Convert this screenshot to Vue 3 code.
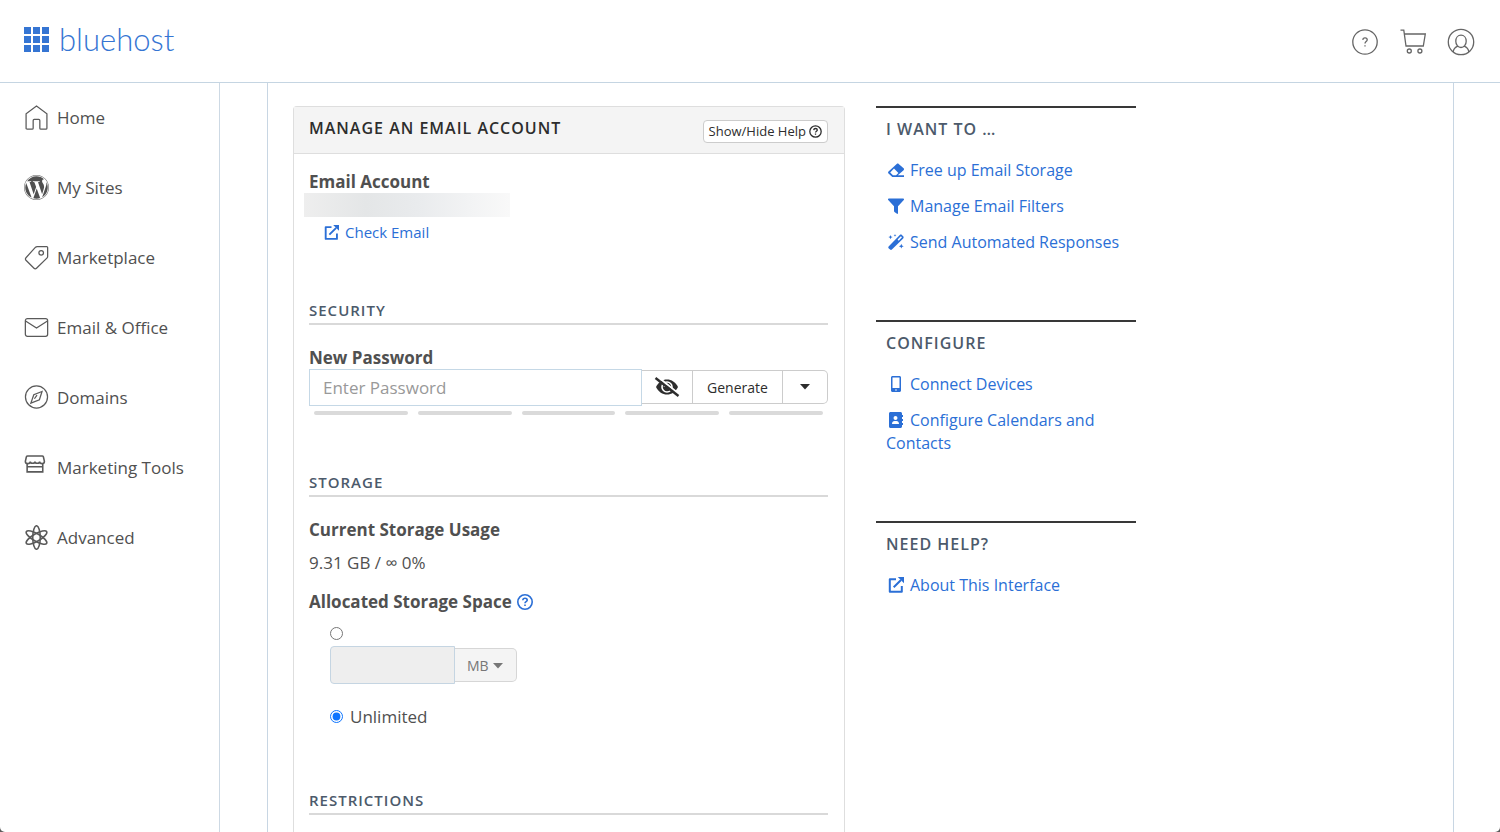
<script setup>
import { ref } from 'vue'

const navItems = [
  { label: 'Home', icon: 'home' },
  { label: 'My Sites', icon: 'wordpress' },
  { label: 'Marketplace', icon: 'tag' },
  { label: 'Email & Office', icon: 'mail' },
  { label: 'Domains', icon: 'compass' },
  { label: 'Marketing Tools', icon: 'store' },
  { label: 'Advanced', icon: 'atom' },
]

const sections = [
  {
    title: 'I WANT TO …',
    links: [
      { label: 'Free up Email Storage', icon: 'eraser' },
      { label: 'Manage Email Filters', icon: 'filter' },
      { label: 'Send Automated Responses', icon: 'wand' },
    ],
  },
  {
    title: 'CONFIGURE',
    links: [
      { label: 'Connect Devices', icon: 'phone' },
      { label: 'Configure Calendars and Contacts', icon: 'contacts' },
    ],
  },
  { title: 'NEED HELP?', links: [{ label: 'About This Interface', icon: 'external' }] },
]

const password = ref('')
const quota = ref('unlimited')
const dots = [0, 9, 18]
</script>

<template>
  <div class="page">
    <header class="topbar">
      <a class="brand" href="#">
        <svg class="brand-grid" viewBox="0 0 25 25" aria-hidden="true">
          <template v-for="y in dots" :key="y">
            <rect v-for="x in dots" :key="x" :x="x" :y="y" width="7" height="7" />
          </template>
        </svg>
        <span>bluehost</span>
      </a>
      <div class="actions">
        <button type="button" class="icon-btn" aria-label="Help">
          <svg viewBox="0 0 28 28" class="line-icon">
            <circle cx="14" cy="14" r="12.2" />
            <path d="M11.8 11.9c.1-1.5 1.1-2.1 2.2-2.1 1.300 0 2.200.8 2.200 1.900 0 1.900-2.200 1.800-2.200 3.700M14 17.200v1.300" />
          </svg>
        </button>
        <button type="button" class="icon-btn" aria-label="Cart">
          <svg viewBox="0 0 28 28" class="line-icon">
            <path d="M1.500 2.200h3.300l2.200 15.800h17.300l2-12H5.500" />
            <circle cx="10.300" cy="23" r="2" />
            <circle cx="20.900" cy="23" r="2" />
          </svg>
        </button>
        <button type="button" class="icon-btn" aria-label="Profile">
          <svg viewBox="0 0 28 28" class="line-icon">
            <circle cx="14" cy="14" r="12.700" />
            <path d="M14 7.200c3 0 5.200 2.500 5.200 6s-2.200 6.300-5.200 6.300-5.200-2.800-5.200-6.300 2.200-6 5.200-6zM6.200 24c.3-2.800 1.800-4.700 4.600-5.800M21.800 24c-.3-2.800-1.800-4.700-4.600-5.800" />
          </svg>
        </button>
      </div>
    </header>

    <div class="layout">
      <nav class="sidebar">
        <a v-for="item in navItems" :key="item.label" href="#" class="nav-link">
          <svg viewBox="0 0 24 24" class="nav-icon" aria-hidden="true">
            <path v-if="item.icon === 'home'" d="M2 22.200V8.400L12 1l10 7.400v13.800c0 .6-.4 1-1 1h-4.800c-.6 0-1-.4-1-1v-7.400c0-.6-.4-1-1-1H9.800c-.6 0-1 .4-1 1v7.400c0 .6-.4 1-1 1H3c-.6 0-1-.4-1-1z" />
            <path v-else-if="item.icon === 'wordpress'" class="solid" d="M21.469 6.825c.84 1.537 1.318 3.300 1.318 5.175 0 3.979-2.156 7.456-5.363 9.325l3.295-9.527c.615-1.540.82-2.771.82-3.864 0-.405-.026-.78-.07-1.110m-7.981.105c.647-.03 1.232-.105 1.232-.105.582-.075.514-.93-.067-.899 0 0-1.755.135-2.880.135-1.064 0-2.850-.15-2.850-.15-.585-.03-.661.855-.075.885 0 0 .54.061 1.125.09l1.680 4.605-2.370 7.080L5.354 6.900c.649-.03 1.234-.1 1.234-.1.585-.075.516-.93-.065-.896 0 0-1.746.138-2.874.138-.2 0-.438-.008-.69-.015C4.911 3.150 8.235 1.215 12 1.215c2.809 0 5.365 1.072 7.286 2.833-.046-.003-.091-.009-.141-.009-1.060 0-1.812.923-1.812 1.914 0 .89.513 1.643 1.060 2.531.411.72.89 1.643.89 2.977 0 .915-.354 1.994-.821 3.479l-1.075 3.585-3.900-11.610zM12 22.784c-1.059 0-2.081-.153-3.048-.437l3.237-9.406 3.315 9.087c.024.053.05.101.078.149-1.120.393-2.325.609-3.582.609M1.211 12c0-1.564.336-3.050.935-4.390L7.290 21.709C3.694 19.960 1.212 16.271 1.211 12M12 0C5.385 0 0 5.385 0 12s5.385 12 12 12 12-5.385 12-12S18.615 0 12 0M12 .5C18.300.5 23.500 5.700 23.500 12S18.300 23.500 12 23.500.5 18.300.5 12 5.700.5 12 .5" fill-rule="evenodd" />
            <g v-else-if="item.icon === 'tag'">
              <path d="M12.600 1.500h9.200c.5 0 .9.400.9.900v8.700c0 .5-.2 1-.5 1.300L12 22.300c-.7.700-1.700.7-2.400 0l-7.700-7.600c-.7-.7-.7-1.800 0-2.500L11.100 2.100c.4-.4.900-.6 1.500-.6z" />
              <circle cx="16.500" cy="7.500" r="2.200" />
            </g>
            <path v-else-if="item.icon === 'mail'" d="M3.300 3.500h17.400c1.100 0 2 .9 2 2v13c0 1.100-.9 2-2 2H3.300c-1.100 0-2-.9-2-2v-13c0-1.100.9-2 2-2zM1.500 5.700L12 12.500l10.500-6.800" />
            <g v-else-if="item.icon === 'compass'">
              <circle cx="12" cy="11.500" r="10.600" />
              <path d="M17.300 6.200l-2.500 8-8.200 3.200 2.800-8zM12.500 9.800L10 13.200" />
            </g>
            <g v-else-if="item.icon === 'store'" class="heavy">
              <path d="M3.500 1h14c.5 0 .9.200 1.100.700l1 4.300c0 1.300-.9 2.300-2.200 2.300S15 7.300 15 6.300c0 1-1 1.700-2.200 1.700s-2.300-.7-2.300-1.700C10.500 7.300 9.500 8 8.300 8S6 7.300 6 6.300c0 1.200-1 2-2.400 2S1.300 7.300 1.300 6l1-4.300C2.500 1.200 3 1 3.500 1zM3 8.300v7.900h15V8.300M3 11.200h15" />
            </g>
            <g v-else class="atom">
              <ellipse cx="12" cy="12" rx="3.600" ry="11.300" />
              <ellipse cx="12" cy="12" rx="3.600" ry="11.300" transform="rotate(60 12 12)" />
              <ellipse cx="12" cy="12" rx="3.600" ry="11.300" transform="rotate(120 12 12)" />
            </g>
          </svg>
          <span>{{ item.label }}</span>
        </a>
      </nav>

      <main class="frame">
        <div class="columns">
          <section class="panel">
            <div class="panel-head">
              <h1>MANAGE AN EMAIL ACCOUNT</h1>
              <button type="button" class="help-btn">
                Show/Hide Help
                <svg viewBox="0 0 16 16" class="help-icon" aria-hidden="true">
                  <circle cx="8" cy="8" r="7" />
                  <path d="M5.800 6.300c.1-1.300 1-2 2.200-2s2.200.8 2.200 1.900c0 1.500-2.200 1.500-2.200 3.100M8 10.600v1.500" />
                </svg>
              </button>
            </div>

            <div class="panel-body">
              <h3>Email Account</h3>
              <div class="redacted"></div>
              <a href="#" class="check-link">
                <svg viewBox="0 0 16 16" class="glyph external" aria-hidden="true">
                  <path class="stroke" d="M8 2.200H1.800v12.600h12V9M5.700 10.300L13 3" />
                  <path d="M9.800 0H16v6.200z" />
                </svg>
                Check Email
              </a>

              <h2 class="first">SECURITY</h2>
              <label for="password" class="field-label">New Password</label>
              <div class="password-row">
                <input id="password" v-model="password" type="password" placeholder="Enter Password" />
                <div class="btn-group">
                  <button type="button" class="eye" aria-label="Show password">
                    <svg viewBox="0 0 26 22" aria-hidden="true">
                      <path d="M2 11c2.500-5 6.500-7.500 11-7.500S21.500 6 24 11c-2.500 5-6.500 7.500-11 7.500S4.500 16 2 11z" />
                      <circle cx="13" cy="11" r="5" class="ring" />
                      <path d="M13 8.500c-1.500 0-2.500 1-2.500 2.500" class="ring" />
                      <path d="M4 1l21.500 17.500" class="halo" />
                      <path d="M1.500 2l23 18" class="slash" />
                    </svg>
                  </button>
                  <button type="button" class="generate">Generate</button>
                  <button type="button" class="more" aria-label="Generator options">
                    <svg viewBox="0 0 10 6" class="caret"><path d="M0 0h10L5 5.500z" /></svg>
                  </button>
                </div>
              </div>
              <div class="meter"><span v-for="n in 5" :key="n"></span></div>

              <h2>STORAGE</h2>
              <h3 class="field-label">Current Storage Usage</h3>
              <p class="usage">9.31 GB / ∞ 0%</p>
              <h3 class="allocated">
                Allocated Storage Space
                <button type="button" class="info" aria-label="About storage space">
                  <svg viewBox="0 0 16 16" class="help-icon">
                    <circle cx="8" cy="8" r="7.200" />
                    <path d="M5.800 6.300c.1-1.300 1-2 2.200-2s2.200.8 2.200 1.900c0 1.500-2.200 1.500-2.200 3.100M8 10.600v1.500" />
                  </svg>
                </button>
              </h3>
              <div class="quota">
                <input v-model="quota" type="radio" name="quota" value="custom" aria-label="Custom quota" />
                <div class="quota-row">
                  <input type="text" class="amount" disabled aria-label="Quota amount" />
                  <div class="unit">
                    <select disabled aria-label="Quota unit"><option>MB</option></select>
                    <svg viewBox="0 0 10 6" class="caret"><path d="M0 0h10L5 5.500z" /></svg>
                  </div>
                </div>
                <label class="unlimited">
                  <input v-model="quota" type="radio" name="quota" value="unlimited" />
                  Unlimited
                </label>
              </div>

              <h2 class="restrictions">RESTRICTIONS</h2>
            </div>
          </section>

          <aside class="side">
            <section v-for="s in sections" :key="s.title">
              <h2>{{ s.title }}</h2>
              <ul>
                <li v-for="l in s.links" :key="l.label">
                  <a href="#"><svg viewBox="0 0 16 16" class="glyph" aria-hidden="true">
                    <g v-if="l.icon === 'eraser'">
                      <path fill-rule="evenodd" d="M15.600 8.200L9.800 13.200H16V15H4.300L.5 11.600c-.6-.6-.6-1.500 0-2.100l8.200-7.600c.6-.5 1.400-.5 2 0l4.900 4.300c.6.600.6 1.400 0 2zM6 6.600L2.200 10.500 5 13.200h3l2.400-2.300z" />
                    </g>
                    <path v-else-if="l.icon === 'filter'" d="M.8.500h14.400c.8 0 1.100.8.600 1.400L10 8.300v7c0 .6-.5.800-1 .5l-2.500-1.900c-.3-.2-.5-.5-.5-.8V8.300L.2 1.900C-.3 1.300 0 .5.800.5z" />
                    <g v-else-if="l.icon === 'wand'">
                      <path fill-rule="evenodd" d="M.6 12.600L11.800 1c.6-.6 1.500-.6 2.100 0l1.300 1.300c.6.600.6 1.500 0 2.100L3.900 15.600c-.5.500-1.300.5-1.800 0L.6 14.200c-.4-.4-.4-1.100 0-1.600zM12.900 2.200L9.600 5.600l1.100 1.100L14 3.300z" />
                      <path d="M2.500 1l.6 1.500 1.500.6-1.500.6-.6 1.500-.6-1.500L.4 3.100l1.500-.6zM7 0l.4 1 1 .4-1 .4-.4 1-.4-1-1-.4 1-.4zM13.300 9.800l.7 1.700 1.700.7-1.700.7-.7 1.700-.7-1.700-1.700-.7 1.700-.7z" />
                    </g>
                    <path v-else-if="l.icon === 'phone'" fill-rule="evenodd" d="M4.500 0h7c.8 0 1.500.7 1.500 1.500v13c0 .8-.7 1.500-1.500 1.500h-7c-.8 0-1.500-.7-1.500-1.500v-13C3 .7 3.700 0 4.500 0zm0 1.500V12h7V1.500zM8 13.200a.8.8 0 100 1.600.8.8 0 000-1.600z" />
                    <path v-else-if="l.icon === 'contacts'" fill-rule="evenodd" d="M2.500 0h10c.8 0 1.500.7 1.500 1.500V3h1v2h-1v2h1v2h-1v2h1v2h-1v1.500c0 .8-.7 1.500-1.500 1.500h-10C1.700 16 1 15.300 1 14.500v-13C1 .7 1.700 0 2.500 0zM7.500 4a2 2 0 100 4 2 2 0 000-4zM4 12h7c0-1.800-1-3-2.500-3h-2C5 9 4 10.200 4 12z" />
                    <g v-else>
                      <path class="stroke" d="M8 2.200H1.800v12.600h12V9M5.700 10.300L13 3" />
                      <path d="M9.800 0H16v6.200z" />
                    </g>
                  </svg>{{ l.label }}</a>
                </li>
              </ul>
            </section>
          </aside>
        </div>
      </main>
    </div>
  </div>
</template>

<style>
html { background: #5c5c5c; }
body { margin: 0; }
</style>

<style scoped>
* { box-sizing: border-box; }
.page {
  min-height: 100vh;
  display: flex;
  flex-direction: column;
  background: #fff;
  border-radius: 0 0 5px 5px;
  overflow: hidden;
  font-family: "Open Sans", "Noto Sans", sans-serif;
  font-size: 17px;
  line-height: 23px;
  color: #505050;
}
h1, h2, h3, p, ul { margin: 0; padding: 0; }
ul { list-style: none; }
a { color: #2b6fd6; text-decoration: none; }
button, input, select { font: inherit; color: inherit; }
button { cursor: pointer; }

.topbar {
  height: 83px;
  display: flex;
  align-items: center;
  justify-content: space-between;
  padding: 0 25px 0 24px;
  border-bottom: 1px solid #c5d5e2;
}
.brand {
  display: flex;
  align-items: center;
  gap: 10px;
  padding-bottom: 4px;
  font-family: Lato, "Open Sans", sans-serif;
  font-weight: 300;
  font-size: 31px;
  line-height: 40px;
  color: #3575d3;
}
.brand-grid { width: 25px; height: 25px; fill: #3575d3; }
.actions { display: flex; gap: 20px; padding-top: 1px; }
.icon-btn { padding: 0; border: 0; background: none; display: flex; }
.icon-btn svg { width: 28px; height: 28px; }
.line-icon { fill: none; stroke: #666; stroke-width: 1.3; }

.layout { flex: 1; display: flex; }
.sidebar {
  width: 220px;
  flex: none;
  padding: 11px 0 0 24px;
  border-right: 1px solid #cdd9e4;
}
.nav-link {
  height: 46px;
  margin-bottom: 24px;
  display: flex;
  align-items: center;
  gap: 8px;
  color: #505050;
}
.nav-icon { width: 25px; height: 25px; fill: none; stroke: #5a5a5a; stroke-width: 1.2; }
.nav-icon .solid { fill: #505050; stroke: none; }
.nav-icon .heavy, .nav-icon .atom { stroke-width: 1.5; }

.frame {
  flex: 1;
  display: flex;
  margin: 0 46px 0 47px;
  padding: 23px 25px 0;
  border: solid #c8d6e3;
  border-width: 0 1px;
}
.columns {
  flex: 1;
  max-width: 843px;
  display: grid;
  grid-template-columns: minmax(0, 552fr) minmax(0, 260fr);
  gap: 31px;
}
.panel {
  border: 1px solid #dedede;
  border-bottom: 0;
  border-radius: 4px 4px 0 0;
}
.panel-head {
  height: 47px;
  display: flex;
  align-items: center;
  justify-content: space-between;
  padding: 2px 16px 0 15px;
  background: #f4f4f4;
  border-bottom: 1px solid #dedede;
}
h1 { padding-bottom: 6px; font-size: 16px; line-height: 20px; font-weight: 600; letter-spacing: 1px; color: #2d2d2d; }
.help-btn {
  height: 23px;
  display: flex;
  align-items: center;
  gap: 3px;
  padding: 0 5px;
  border: 1px solid #ccc;
  border-radius: 4px;
  background: #fff;
  font-size: 13px;
  line-height: 20px;
  color: #2d2d2d;
}
.help-icon { width: 13px; height: 13px; fill: none; stroke: currentColor; stroke-width: 1.6; }
.panel-body { padding: 16px 16px 0 15px; }
h3, .field-label { display: block; font-size: 17px; font-weight: 700; line-height: 23px; }
.redacted {
  width: 206px;
  height: 24px;
  margin-left: -5px;
  background: linear-gradient(90deg, #eeeeee 0, #e4e6e7 30%, #e9ebed 55%, #f2f3f4 80%, #f9f9f9 100%);
}
.check-link {
  display: flex;
  align-items: center;
  gap: 6px;
  margin: 4px 0 0 15px;
  font-size: 15px;
  line-height: 23px;
}
.glyph { width: 16px; height: 16px; fill: #2b6fd6; }
.glyph .stroke { fill: none; stroke: #2b6fd6; stroke-width: 2; stroke-linejoin: round; }
.external { width: 15px; height: 15px; }
h2 {
  margin-top: 56px;
  padding-bottom: 2px;
  border-bottom: 2px solid #d9d9d9;
  font-size: 15px;
  font-weight: 600;
  line-height: 22px;
  letter-spacing: 1px;
  color: #4c5a6b;
}
h2.first { margin-top: 55px; }
h2.restrictions { margin-top: 61px; }
.field-label { margin-top: 21px; }
.password-row { display: flex; align-items: flex-start; }
.password-row input {
  flex: 1;
  min-width: 0;
  height: 37px;
  padding: 0 13px;
  border: 1px solid #c5d8e6;
  background: #fff;
  outline: 0;
}
.password-row input::placeholder { color: #999; opacity: 1; }
.btn-group { display: flex; height: 34px; margin-top: 1px; }
.btn-group button {
  display: flex;
  align-items: center;
  justify-content: center;
  padding: 0;
  background: #fff;
  border: 1px solid #ccc;
  border-left: 0;
  font-size: 14px;
  color: #2d2d2d;
}
.eye { width: 51px; }
.eye svg { width: 26px; height: 22px; fill: #2d2d2d; }
.eye .ring { fill: none; stroke: #fff; stroke-width: 1.6; }
.eye .halo { stroke: #fff; stroke-width: 2; }
.eye .slash { stroke: #2d2d2d; stroke-width: 2.4; }
.generate { width: 90px; }
.btn-group .more { width: 45px; border-radius: 0 5px 5px 0; }
.caret { width: 10px; height: 6px; fill: currentColor; }
.meter { display: flex; gap: 10px; padding: 0 5px; margin-top: 5px; }
.meter span { flex: 1; height: 4px; border-radius: 2px; background: #dadada; }
.usage { margin-top: 10px; }
.allocated { margin-top: 16px; display: flex; align-items: center; gap: 5px; }
.info { display: flex; padding: 0; border: 0; background: none; color: #2b6fd6; }
.info svg { width: 16px; height: 16px; }
.quota { padding-left: 21px; margin-top: 14px; }
.quota input[type="radio"] { display: block; width: 13px; height: 13px; margin: 0; accent-color: #0d74ff; }
.quota-row { display: flex; align-items: center; margin-top: 6px; }
.amount {
  width: 125px;
  height: 38px;
  border: 1px solid #c5d5e2;
  border-radius: 4px 0 0 4px;
  background: #eee;
}
.unit { position: relative; color: #777; }
.unit select {
  display: block;
  width: 62px;
  height: 34px;
  padding: 0 12px;
  appearance: none;
  border: 1px solid #d6d6d6;
  border-left: 0;
  border-radius: 0 5px 5px 0;
  background: #f4f4f4;
  color: #777;
  font-size: 14px;
  opacity: 1;
}
.unit .caret { position: absolute; right: 14px; top: 15px; pointer-events: none; }
.unlimited { display: flex; align-items: center; gap: 7px; margin-top: 21px; }

.side { font-size: 16px; }
.side section { margin-bottom: 66px; padding: 10px 10px 0; border-top: 2px solid #383838; }
.side h2 { margin: 0; padding: 0 0 5px; border: 0; font-size: 16px; line-height: 23px; }
.side li { margin-top: 13px; }
.side .glyph { margin: 0 6px 0 2px; vertical-align: -2px; }
</style>
